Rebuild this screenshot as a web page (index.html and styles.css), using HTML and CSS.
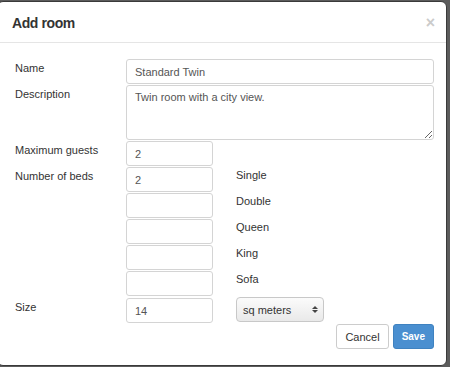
FILE: index.html
```html
<!DOCTYPE html>
<html lang="en">
<head>
    <meta charset="UTF-8">
    <meta name="viewport" content="width=device-width, initial-scale=1.0">
    <title>Add room</title>
    <link rel="stylesheet" href="styles.css">
</head>
<body>
    <div class="modal">
        <div class="modal-header">
            <h4 class="modal-title">Add room</h4>
            <span class="close">&times;</span>
        </div>
        <form class="modal-body">
            <div class="row">
                <label for="name">Name</label>
                <input type="text" id="name" class="wide" value="Standard Twin">
            </div>
            <div class="row">
                <label for="description">Description</label>
                <textarea id="description" class="wide">Twin room with a city view.</textarea>
            </div>
            <div class="row">
                <label for="guests">Maximum guests</label>
                <input type="text" id="guests" class="short" value="2">
            </div>

            <!-- Beds -->
            <div class="row">
                <label for="single">Number of beds</label>
                <input type="text" id="single" class="short" value="2">
                <span class="bed">Single</span>
            </div>
            <div class="row">
                <span></span>
                <input type="text" class="short">
                <span class="bed">Double</span>
            </div>
            <div class="row">
                <span></span>
                <input type="text" class="short">
                <span class="bed">Queen</span>
            </div>
            <div class="row">
                <span></span>
                <input type="text" class="short">
                <span class="bed">King</span>
            </div>
            <div class="row">
                <span></span>
                <input type="text" class="short">
                <span class="bed">Sofa</span>
            </div>

            <div class="row size-row">
                <label for="size">Size</label>
                <input type="text" id="size" class="short" value="14">
                <span class="select-wrap">
                    <select>
                        <option>sq meters</option>
                        <option>sq feet</option>
                    </select>
                </span>
            </div>

            <div class="actions">
                <button type="button" class="btn">Cancel</button>
                <button type="submit" class="btn btn-primary">Save</button>
            </div>
        </form>
    </div>
</body>
</html>
```

FILE: styles.css
```css
body {
    margin: 0;
    padding: 1px 0 0;
    background-color: #5c5c5c;
    font-family: "Liberation Sans", Arial, sans-serif;
    font-size: 11px;
    color: #333;
    overflow: hidden;
}
.modal {
    width: 450px;
    height: 365px;
    margin-left: -3px;
    box-sizing: border-box;
    background: white;
    border: 1px solid #3a3a3a;
    border-radius: 6px;
}
.modal-header {
    display: flex;
    justify-content: space-between;
    align-items: flex-start;
    padding: 11px 11px 9px 14px;
    border-bottom: 1px solid #e5e5e5;
}
.modal-title {
    margin: 0;
    font-size: 14px;
    line-height: 20px;
    font-weight: bold;
    letter-spacing: -0.4px;
    color: #333;
}
.close {
    font-size: 16px;
    line-height: 20px;
    font-weight: bold;
    color: #cbcbcb;
    cursor: pointer;
}
.modal-body {
    padding: 16px 12px 0 17px;
}
.row {
    display: grid;
    grid-template-columns: 111px 87px 1fr;
    align-items: start;
    margin-bottom: 1px;
}
.row label, .bed {
    padding-top: 2px;
    line-height: 15px;
}
.bed {
    padding-left: 23px;
    padding-top: 1px;
}
input[type="text"], textarea {
    box-sizing: border-box;
    height: 25px;
    margin: 0;
    padding: 0 8px;
    border: 1px solid #d4d4d4;
    border-radius: 3px;
    font-family: inherit;
    font-size: 11px;
    color: #555;
}
.wide {
    grid-column: 2 / -1;
}
textarea.wide {
    height: 55px;
    padding: 4px 8px;
    line-height: 15px;
}
.size-row {
    margin-top: 2px;
}
.select-wrap {
    position: relative;
    margin: -1px 0 0 23px;
    width: 88px;
}
.select-wrap select {
    appearance: none;
    -webkit-appearance: none;
    width: 88px;
    height: 25px;
    padding: 0 6px;
    border: 1px solid #c8c8c8;
    border-radius: 4px;
    background: linear-gradient(#fbfbfb, #e9e9e9);
    font-family: inherit;
    font-size: 11px;
    color: #333;
}
.select-wrap::before, .select-wrap::after {
    content: "";
    position: absolute;
    right: 6px;
    border-left: 3px solid transparent;
    border-right: 3px solid transparent;
}
.select-wrap::before {
    top: 9px;
    border-bottom: 3px solid #444;
}
.select-wrap::after {
    top: 13px;
    border-top: 3px solid #444;
}
.actions {
    display: flex;
    justify-content: flex-end;
    gap: 4px;
}
.btn {
    box-sizing: border-box;
    height: 25px;
    padding: 0 8px;
    border: 1px solid #ccc;
    border-radius: 3px;
    background: white;
    font-family: inherit;
    font-size: 11px;
    color: #333;
    cursor: pointer;
}
.btn-primary {
    border-color: #3f82c0;
    background-color: #4a8fd0;
    color: white;
    font-weight: bold;
    font-size: 10px;
}
```
